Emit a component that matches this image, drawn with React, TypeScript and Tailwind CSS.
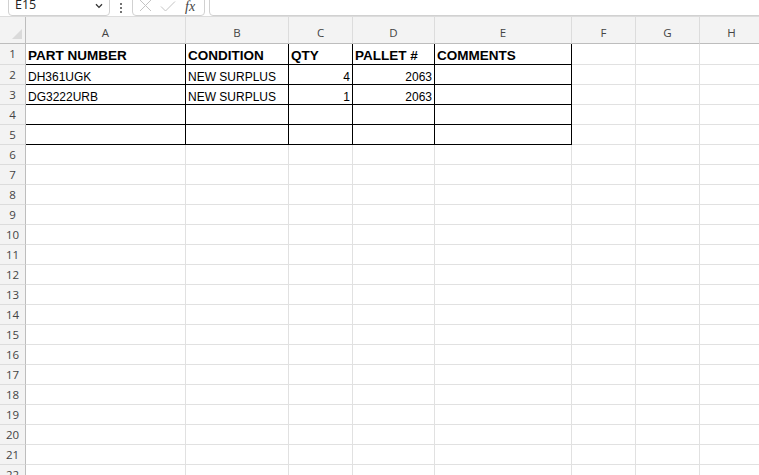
import React from "react";

const cols = [
  { key: "A", w: "w-[160px]" },
  { key: "B", w: "w-[103px]" },
  { key: "C", w: "w-[64px]" },
  { key: "D", w: "w-[82px]" },
  { key: "E", w: "w-[137px]" },
  { key: "F", w: "w-[64px]" },
  { key: "G", w: "w-[64px]" },
  { key: "H", w: "w-[64px]" },
];

type Cell = { text: string; bold?: boolean; right?: boolean };

const data: Cell[][] = [
  [
    { text: "PART NUMBER", bold: true },
    { text: "CONDITION", bold: true },
    { text: "QTY", bold: true },
    { text: "PALLET #", bold: true },
    { text: "COMMENTS", bold: true },
  ],
  [
    { text: "DH361UGK" },
    { text: "NEW SURPLUS" },
    { text: "4", right: true },
    { text: "2063", right: true },
    { text: "" },
  ],
  [
    { text: "DG3222URB" },
    { text: "NEW SURPLUS" },
    { text: "1", right: true },
    { text: "2063", right: true },
    { text: "" },
  ],
  [{ text: "" }, { text: "" }, { text: "" }, { text: "" }, { text: "" }],
  [{ text: "" }, { text: "" }, { text: "" }, { text: "" }, { text: "" }],
];

function TopBar() {
  return (
    <div className="flex items-end h-[16px] overflow-hidden bg-white shrink-0">
      {/* name box */}
      <div className="ml-[8px] w-[102px] h-[24px] shrink-0 flex items-end justify-between border border-[#d1d1d1] rounded-[4px] pl-[6px] pr-[6px] pb-[4px]">
        <span className="text-[12.5px] leading-[13px] text-[#222] font-['Open_Sans']">E15</span>
        <svg width="8" height="6" viewBox="0 0 8 6" className="mb-[2px]">
          <path d="M1 1.2 L4 4.4 L7 1.2" fill="none" stroke="#333" strokeWidth="1.3" />
        </svg>
      </div>
      {/* more dots */}
      <div className="w-[22px] h-full shrink-0 flex flex-col items-center justify-start gap-[2px] pt-[3px]">
        <span className="w-[2px] h-[2px] bg-[#444] rounded-full" />
        <span className="w-[2px] h-[2px] bg-[#444] rounded-full" />
        <span className="w-[2px] h-[2px] bg-[#444] rounded-full" />
      </div>
      {/* cancel / enter / fx */}
      <div className="w-[73px] h-[24px] shrink-0 flex items-end border border-[#d1d1d1] rounded-[4px] pb-[2px] pl-[6px]">
        <svg width="13" height="13" viewBox="0 0 13 13" className="mb-[1px]">
          <path d="M1 1 L12 12 M12 1 L1 12" stroke="#c4c4c4" strokeWidth="1" fill="none" />
        </svg>
        <svg width="16" height="12" viewBox="0 0 16 12" className="ml-[8px] mb-[1px]">
          <path d="M1 6.5 L5.5 11 L15 1.5" stroke="#c4c4c4" strokeWidth="1" fill="none" />
        </svg>
        <span className="ml-[9px] text-[14px] leading-[12px] italic text-[#444] font-['Liberation_Serif']">fx</span>
      </div>
      {/* formula input */}
      <div className="ml-[4px] flex-1 h-[24px] border border-[#d1d1d1] rounded-[4px] mr-[-10px]" />
    </div>
  );
}

function HeaderRow() {
  return (
    <div className="flex h-[28px] shrink-0 bg-[#f3f3f3] border-t border-[#dcdcdc]">
      <div className="w-[26px] shrink-0 border-r border-b border-[#bdbdbd] relative">
        <svg width="11" height="11" viewBox="0 0 11 11" className="absolute left-[12px] top-[12px]">
          <path d="M10 0 L10 10 L0 10 Z" fill="#dadada" />
        </svg>
      </div>
      {cols.map((c) => (
        <div
          key={c.key}
          className={`${c.w} shrink-0 border-r border-b border-r-[#dcdcdc] border-b-[#bdbdbd] flex items-end justify-center pb-[3px] text-[11.5px] leading-[14px] text-[#444] font-['Open_Sans']`}
        >
          {c.key}
        </div>
      ))}
    </div>
  );
}

function Row({ n }: { n: number }) {
  const inTable = n <= 5;
  const cells = inTable ? data[n - 1] : [];
  return (
    <div className={`flex shrink-0 ${n === 1 ? "h-[21px]" : "h-[20px]"}`}>
      <div className="w-[26px] shrink-0 bg-[#f3f3f3] border-r border-b border-r-[#bdbdbd] border-b-[#dcdcdc] flex items-center justify-center text-[11.5px] leading-[14px] text-[#444] font-['Open_Sans']">
        {n}
      </div>
      {cols.map((c, i) => {
        const cell = inTable && i < 5 ? cells[i] : undefined;
        const black = inTable && i < 5;
        return (
          <div
            key={c.key}
            className={`${c.w} shrink-0 border-r border-b ${
              black ? "border-black" : "border-[#e1e1e1]"
            } flex items-end px-[2px] font-['Liberation_Sans'] text-black ${
              cell?.right ? "justify-end" : "justify-start"
            } ${cell?.bold ? "text-[13.5px] leading-[16px] font-bold" : "text-[12px] leading-[14px]"}`}
          >
            {cell?.text}
          </div>
        );
      })}
    </div>
  );
}

export default function App() {
  const rows = Array.from({ length: 22 }, (_, i) => i + 1);
  return (
    <div className="w-[759px] h-[475px] overflow-hidden bg-white flex flex-col">
      <TopBar />
      <HeaderRow />
      {rows.map((n) => (
        <Row key={n} n={n} />
      ))}
    </div>
  );
}
